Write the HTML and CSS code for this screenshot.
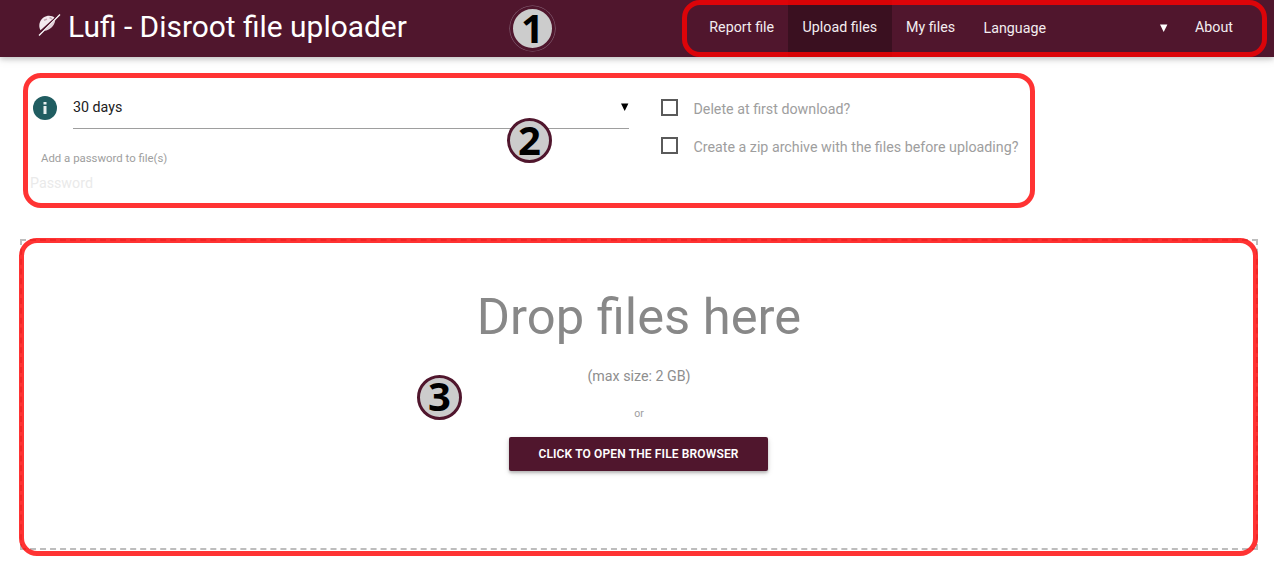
FILE: index.html
```
<!DOCTYPE html>
<html lang="en">
<head>
<meta charset="utf-8">
<title>Lufi - Disroot file uploader</title>
<link rel="stylesheet" href="styles.css">
</head>
<body>
<header class="navbar">
  <a class="brand">
    <svg class="logo" width="24" height="24" viewBox="0 0 24 24">
      <path d="M3.500 18.300C1.200 14 2.200 8.500 6.500 5.500c4-2.600 8.500-2 11 .2z" fill="#f3eaee"/>
      <path d="M7 8.300l3-1.200M12.500 5.500l2.500 1.300" stroke="#c5aab6" stroke-width="1.500"/>
      <path d="M7.500 18.800C12.500 18.200 17.500 14 18.300 8z" fill="#e3d2da"/>
      <path d="M2 23.500L23 2.500" stroke="#fff" stroke-width="1.200"/>
      <path d="M4 19.800L20 4" stroke="#50162d" stroke-width=".7"/>
    </svg>
    <span class="brand-name">Lufi - Disroot file uploader</span>
  </a>
  <nav class="menu">
    <a class="menu-item">Report file</a>
    <a class="menu-item active">Upload files</a>
    <a class="menu-item">My files</a>
    <div class="language"><span>Language</span><svg width="8" height="8" viewBox="0 0 8 8"><path d="M0 .5h7.400L3.700 8z" fill="#fff"/></svg></div>
    <a class="menu-item">About</a>
  </nav>
</header>
<main>
  <section class="options">
    <div class="left">
      <div class="delay">
        <svg class="info" width="24" height="24" viewBox="0 0 24 24"><circle cx="12" cy="12" r="12" fill="#205d61"/><path d="M10.500 6h3v2.600h-3zM10.500 10h3v8h-3z" fill="#e7efef"/></svg>
        <div class="select"><span>30 days</span><svg width="8" height="8" viewBox="0 0 8 8"><path d="M0 .5h7.400L3.700 8z" fill="#000"/></svg></div>
      </div>
      <label class="password-label">Add a password to file(s)</label>
      <div class="password">Password</div>
    </div>
    <div class="checks">
      <label class="check"><span class="box"></span>Delete at first download?</label>
      <label class="check"><span class="box"></span>Create a zip archive with the files before uploading?</label>
    </div>
  </section>
  <section class="dropzone">
    <h1 class="drop-title">Drop files here</h1>
    <p class="max-size">(max size: 2 GB)</p>
    <p class="or">or</p>
    <button class="browse"><span>CLICK TO OPEN THE FILE BROWSER</span></button>
  </section>
</main>
<div class="outline outline-1"></div>
<div class="outline outline-2"></div>
<div class="outline outline-3"></div>
<div class="badge badge-1"><span>1</span></div>
<div class="badge badge-2"><span>2</span></div>
<div class="badge badge-3"><span>3</span></div>
</body>
</html>
```
FILE: styles.css
```
* { box-sizing: border-box; }
body {
  margin: 0;
  width: 1274px;
  height: 570px;
  position: relative;
  overflow: hidden;
  background: #fff;
  font: 14.25px/20px Roboto, sans-serif;
  color: #9e9e9e;
}
svg { display: block; flex: none; }
.navbar {
  display: flex;
  justify-content: space-between;
  height: 57px;
  padding: 0 26px 0 37px;
  background: #50162d;
  color: #f3edf0;
  box-shadow: 0 2px 5px rgba(0,0,0,.18), 0 2px 10px rgba(0,0,0,.1);
}
.brand { display: flex; padding-top: 12px; gap: 7px; }
.logo { margin-top: 0; }
.brand-name {
  font-size: 29.9px;
  line-height: 30px;
  white-space: nowrap;
  color: #fff;
}
.menu { display: flex; line-height: 54px; }
.menu-item { padding: 0 14px; white-space: nowrap; }
.menu-item:last-child { padding-right: 15px; }
.active { padding: 0 15px 0 14.5px; background: #3a1020; }
.language {
  display: flex;
  align-items: center;
  justify-content: space-between;
  width: 212px;
  padding: 0 13px 1px 14.5px;
  line-height: 56px;
}
.options {
  display: flex;
  height: 182px;
  padding: 39px 0 0 30px;
}
.left { width: 630.5px; }
.delay { display: flex; padding-left: 3px; gap: 16px; }
.select {
  display: flex;
  justify-content: space-between;
  align-items: center;
  width: 555.5px;
  height: 33px;
  padding-bottom: 10px;
  border-bottom: 1px solid #9e9e9e;
  color: #212121;
}
.password-label {
  display: block;
  margin: 20px 0 0 11px;
  font-size: 11.4px;
  line-height: 18px;
}
.password { margin-top: 6px; color: #eaeaea; }
.checks { display: flex; flex-direction: column; gap: 18px; padding-top: 3px; }
.check { display: flex; align-items: center; gap: 16px; white-space: nowrap; }
.box {
  width: 17px;
  height: 17px;
  border: 2px solid #5a5a5a;
  position: relative;
  top: -2px;
}
.dropzone {
  display: flex;
  flex-direction: column;
  align-items: center;
  width: 1238px;
  height: 311px;
  margin-left: 20px;
  padding-top: 46px;
  border: 2px dashed #bdbdbd;
}
.drop-title {
  margin: 0;
  font-size: 50.7px;
  line-height: 60px;
  font-weight: 400;
  color: #888;
}
.max-size { margin: 19px 0 0; color: #8e8e8e; }
.or { margin: 20px 0 0; font-size: 10.5px; line-height: 16px; }
.browse {
  width: 259px;
  height: 34px;
  margin: 15px 1px 0 0;
  padding: 1px 0 0;
  border: 0;
  border-radius: 2px;
  background: #50162d;
  color: #fff;
  font: 600 12px/33px Roboto, sans-serif;
  letter-spacing: .14px;
  white-space: nowrap;
  box-shadow: 0 2px 3px rgba(0,0,0,.22), 0 2px 6px rgba(0,0,0,.12);
}
.outline {
  position: absolute;
  border: 5px solid rgba(255,0,0,.8);
  border-radius: 18px;
}
.outline-1 { left: 682px; top: 0; width: 585px; height: 57px; }
.outline-2 { left: 23px; top: 73px; width: 1012px; height: 135px; }
.outline-3 { left: 19px; top: 238px; width: 1239px; height: 318px; }
.badge {
  position: absolute;
  display: flex;
  align-items: center;
  justify-content: center;
  width: 45px;
  height: 45px;
  padding-bottom: 2px;
  border: 3px solid #50162d;
  border-radius: 50%;
  background: #ccc;
  color: #000;
  font: 700 40px/40px "Open Sans", sans-serif;
}
.badge-1 { left: 510px; top: 6px; box-shadow: 0 0 0 .6px #88667a; }
.badge-2 { left: 507px; top: 118px; }
.badge-3 { left: 417px; top: 374.500px; }
```
